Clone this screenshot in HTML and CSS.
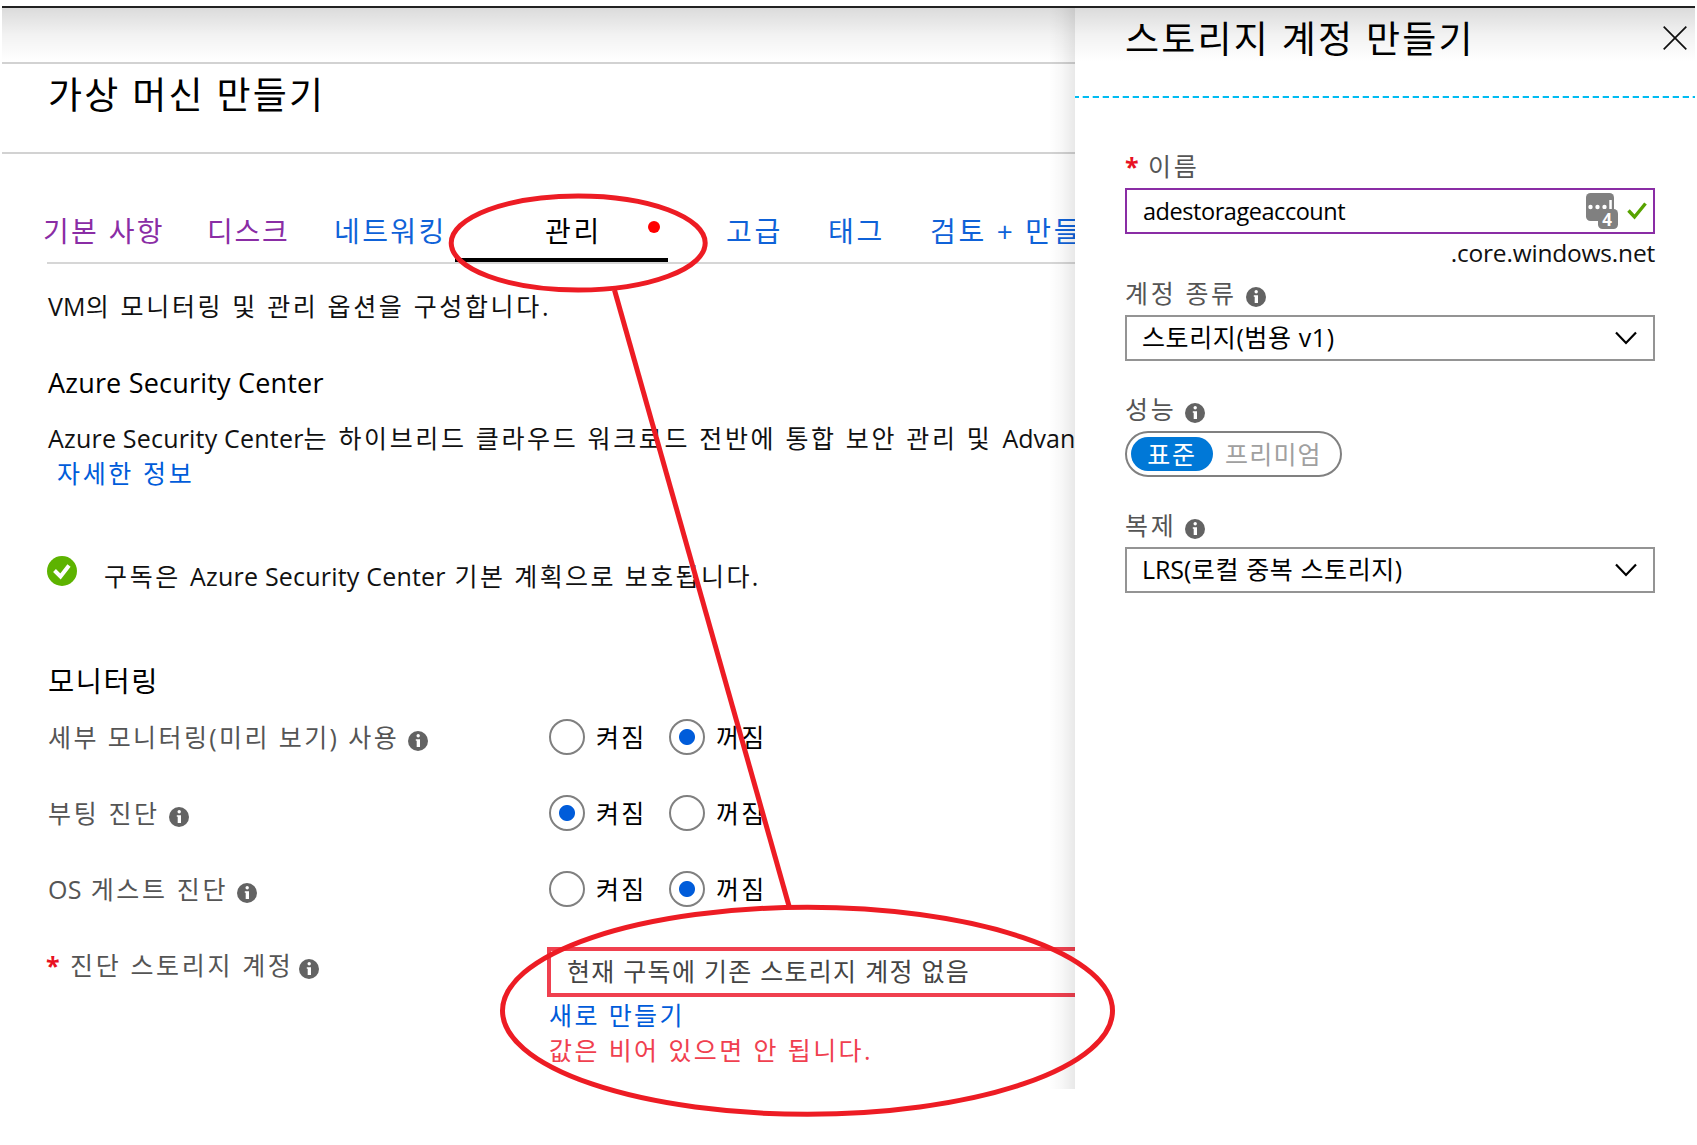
FILE: index.html
```html
<!DOCTYPE html>
<html lang="ko">
<head>
<meta charset="utf-8">
<title>가상 머신 만들기</title>
<link rel="stylesheet" href="styles.css">
</head>
<body>
<svg width="0" height="0" class="defs">
  <symbol id="info" viewBox="0 0 20 20"><circle cx="10" cy="10" r="10" fill="#636363"/><circle cx="10.200" cy="4.700" r="1.700" fill="#fff"/><path d="M7.800 8.200h4.200v7.800H8.700V9.800h-.9z" fill="#fff"/></symbol>
  <symbol id="chevron" viewBox="0 0 22 14"><path d="M1 1.500l10 10.500L21 1.500" fill="none" stroke="#000" stroke-width="2.200"/></symbol>
</svg>
<div class="page">
  <div class="shade"></div>
  <main class="blade">
    <div class="strip"></div>
    <header class="head"><h1>가상 머신 만들기</h1></header>
    <nav class="tabs">
      <a class="tab visited">기본 사항</a>
      <a class="tab visited disk">디스크</a>
      <a class="tab net">네트워킹</a>
      <a class="tab active"><span>관리</span><i class="dot"></i></a>
      <a class="tab">고급</a>
      <a class="tab">태그</a>
      <a class="tab">검토 + 만들기</a>
    </nav>
    <p class="line desc"><span class="la">VM</span>의 모니터링 및 관리 옵션을 구성합니다.</p>
    <h2 class="sec la">Azure Security Center</h2>
    <p class="line"><span class="la">Azure Security Center</span>는 하이브리드 클라우드 워크로드 전반에 통합 보안 관리 및 <span class="adv">Advanced</span></p>
    <p class="line more"><a class="link">자세한 정보</a></p>
    <div class="line plan">
      <svg class="ok" viewBox="0 0 30 30"><circle cx="15" cy="15" r="15" fill="#5db300"/><path d="M7.500 14.500l6 6L22 9.500" fill="none" stroke="#fff" stroke-width="4"/></svg>
      <span>구독은 <span class="la">Azure Security Center</span><span class="snug"> 기본 계획으로 보호됩니다.</span></span>
    </div>
    <h2 class="sec mon">모니터링</h2>
    <div class="row"><div class="label"><span class="snug">세부 모니터링(미리 보기) 사용</span><svg class="info"><use href="#info"/></svg></div>
      <div class="opts"><label><i class="radio"></i>켜짐</label><label><i class="radio on"></i>꺼짐</label></div></div>
    <div class="row"><div class="label">부팅 진단<svg class="info"><use href="#info"/></svg></div>
      <div class="opts"><label><i class="radio on"></i>켜짐</label><label><i class="radio"></i>꺼짐</label></div></div>
    <div class="row"><div class="label"><span><span class="la">OS</span> 게스트 진단</span><svg class="info"><use href="#info"/></svg></div>
      <div class="opts"><label><i class="radio"></i>켜짐</label><label><i class="radio on"></i>꺼짐</label></div></div>
    <div class="row"><div class="label req"><b class="star">*</b>진단 스토리지 계정<svg class="info"><use href="#info"/></svg></div>
      <div class="acct"><div class="bad">현재 구독에 기존 스토리지 계정 없음</div>
      <a class="line link snug">새로 만들기</a><p class="line err snug">값은 비어 있으면 안 됩니다.</p></div></div>
  </main>
  <aside class="panel">
    <header class="phead"><h1>스토리지 계정 만들기</h1>
      <svg class="close" viewBox="0 0 24 24"><path d="M.7.700l22.600 22.600M23.300.700L.7 23.300" stroke="#111" stroke-width="1.700"/></svg></header>
    <svg class="dash"><line x1="0" y1="1" x2="620" y2="1" stroke="#00bcf2" stroke-width="2" stroke-dasharray="6.300 3.700" stroke-dashoffset="2.300"/></svg>
    <form class="form">
      <div class="flabel"><b class="star">*</b>이름</div>
      <div class="box name"><span>adestorageaccount</span>
        <span class="marks"><svg class="pwd" viewBox="0 0 32 36"><rect x="0" y="0" width="28" height="28" rx="4.500" fill="#808080"/><g fill="#fff"><circle cx="4.500" cy="14" r="2.200"/><circle cx="11.500" cy="14" r="2.200"/><circle cx="18.500" cy="14" r="2.200"/><rect x="23.300" y="7" width="2.500" height="10"/></g><rect x="12" y="16" width="20" height="20" rx="4.500" fill="#808080"/><text x="21" y="33" class="count">4</text></svg><svg class="tick" viewBox="0 0 20 18"><path d="M1.500 8.500l6 6.500L18.500 1.500" fill="none" stroke="#57a300" stroke-width="3.400"/></svg></span></div>
      <div class="suffix">.core.windows.net</div>
      <div class="flabel kind">계정 종류<svg class="info"><use href="#info"/></svg></div>
      <div class="box"><span>스토리지(범용 v1)</span><svg class="chev"><use href="#chevron"/></svg></div>
      <div class="flabel gap">성능<svg class="info"><use href="#info"/></svg></div>
      <div class="toggle"><span class="pill">표준</span><span class="off">프리미엄</span></div>
      <div class="flabel gap">복제<svg class="info"><use href="#info"/></svg></div>
      <div class="box"><span><span class="lrs">LRS</span>(로컬 중복 스토리지)</span><svg class="chev"><use href="#chevron"/></svg></div>
    </form>
  </aside>
  <svg class="marker" viewBox="0 0 1697 1145"><g fill="none" stroke="#ed1c24" stroke-width="5"><ellipse cx="578.200" cy="243" rx="127" ry="47"/><path d="M614.500 290L789 906"/><ellipse cx="807.500" cy="1010.800" rx="305" ry="103.500"/></g></svg>
</div>
</body>
</html>
```
FILE: styles.css
```css
* { box-sizing: border-box; margin: 0; padding: 0; }
body { background: #fff; font-family: "Open Sans", "Noto Sans CJK KR", sans-serif; font-size: 25px; line-height: 35px; color: #111; }
.page { position: relative; width: 1697px; height: 1145px; overflow: hidden; display: flex; padding: 6px 2px 0; letter-spacing: 2.65px; white-space: nowrap; }
.page::before { content: ""; position: absolute; left: 2px; right: 2px; top: 6px; height: 2px; background: #222; z-index: 3; }
.defs { position: absolute; }
.shade { position: absolute; left: 2px; right: 2px; top: 8px; height: 54px; background: linear-gradient(rgba(0,0,0,.14), rgba(0,0,0,.05) 50%, rgba(0,0,0,0)); z-index: 2; }
.blade { position: relative; width: 1073px; height: 1083px; overflow: hidden; flex: none; }
.blade::after { content: ""; position: absolute; right: 0; top: 0; bottom: 0; width: 26px; background: linear-gradient(to right, rgba(0,0,0,0), rgba(0,0,0,.03) 50%, rgba(0,0,0,.09)); }
.strip { height: 58px; border-bottom: 2px solid #d2d2d2; }
.head { height: 90px; padding-left: 46px; border-bottom: 2px solid #d2d2d2; }
h1 { font-size: 37px; font-weight: 400; line-height: 62px; color: #000; letter-spacing: 2.2px; }
.la { letter-spacing: .2px; }
.adv { letter-spacing: 0; margin-left: 1px; }
.snug { letter-spacing: 2.4px; }
.tabs { display: grid; grid-template-columns: 165px 126px 120px 272px 102px 102px auto; height: 110px; margin-left: 45px; padding-top: 46px; border-bottom: 2px solid #d6d6d6; font-size: 28px; line-height: 62px; }
.tab { color: #0f62d8; margin-left: -4px; }
.tab.visited { color: #8a2da5; letter-spacing: 2.3px; }
.tab.disk { letter-spacing: 1.8px; margin-left: -5px; }
.tab.net { letter-spacing: 2.4px; }
.tab.active { color: #000; width: 213px; margin-left: -3px; padding-left: 90px; display: flex; box-shadow: inset 0 -4px #000; }
.dot { width: 12px; height: 12px; border-radius: 50%; background: #f00; margin: 21px 0 0 46px; }
.line { padding-left: 46px; display: block; }
.desc { margin-top: 25px; }
.sec { font-size: 27px; font-weight: 400; line-height: 36px; padding-left: 46px; margin: 41px 0 20px; color: #000; }
.more { padding-left: 55px; }
.link { color: #005cda; }
.plan { display: flex; margin-top: 68px; padding-left: 45px; }
.ok { width: 30px; height: 30px; margin: -3px 27px 0 0; }
.mon { font-size: 28.5px; line-height: 35px; margin: 70px 0 0; letter-spacing: 1.5px; }
.row { display: grid; grid-template-columns: 499px 1fr; height: 76px; padding-left: 46px; }
.label { display: flex; height: 76px; align-items: center; color: #555; }
.info { width: 20px; height: 20px; margin: 7px 0 0 9px; flex: none; }
.opts { display: flex; align-items: center; gap: 22px; color: #000; padding-left: 2px; letter-spacing: 2.3px; }
.opts label { display: flex; align-items: center; width: 98px; }
.radio { width: 36px; height: 36px; border: 2px solid #808080; border-radius: 50%; margin-right: 11px; flex: none; }
.radio.on { background: radial-gradient(circle, #005cda 7.500px, #fff 8.500px); }
.star { color: #e81123; font-weight: 700; letter-spacing: 0; width: 24px; }
.req .star { margin-left: -2px; }
.req .info { margin-left: 5px; }
.acct { margin-top: 20px; width: 700px; }
.acct .line { padding-left: 2px; }
.bad { height: 50px; border: 4px solid #f0404f; line-height: 41px; padding-left: 16px; color: #444; margin-bottom: 1px; letter-spacing: 1.28px; }
.err { color: #f0404f; }
.panel { width: 620px; flex: none; background: #fff; }
.phead { height: 90px; display: flex; justify-content: space-between; padding: 2px 8px 0 50px; }
.close { width: 24px; height: 24px; margin-top: 18px; }
.dash { display: block; width: 620px; height: 2px; }
.form { width: 580px; padding: 51px 0 0 50px; }
.flabel { display: flex; align-items: center; height: 35px; margin-bottom: 4px; color: #555; }
.flabel .star { width: 23px; }
.kind { margin-top: 6px; }
.gap { margin-top: 31px; }
.box { display: flex; align-items: center; justify-content: space-between; height: 46px; border: 2px solid #949494; padding: 0 16px 2px 15px; color: #000; letter-spacing: .6px; }
.lrs { letter-spacing: -.1px; }
.name { border-color: #8a2da5; font-size: 23.5px; padding: 0 6px 0 16px; letter-spacing: -.45px; }
.marks { display: flex; align-items: center; gap: 9px; }
.pwd { width: 32px; height: 36px; overflow: visible; }
.tick { width: 20px; height: 18px; }
.count { font: 700 17px "Open Sans", sans-serif; fill: #fff; text-anchor: middle; letter-spacing: 0; }
.chev { width: 22px; height: 14px; margin-top: 2px; }
.suffix { text-align: right; height: 36px; line-height: 38px; font-size: 24.5px; letter-spacing: -.2px; }
.toggle { display: flex; align-items: center; width: 217px; height: 46px; border: 2px solid #808080; border-radius: 23px; padding-left: 4px; }
.pill { width: 82px; height: 34px; border-radius: 17px; background: #0078d7; color: #fff; text-align: center; line-height: 34px; margin-right: 12px; letter-spacing: 1.8px; }
.off { color: #a0a0a0; letter-spacing: 1.2px; }
.marker { position: absolute; left: 0; top: 0; width: 1697px; height: 1145px; z-index: 4; }
```
